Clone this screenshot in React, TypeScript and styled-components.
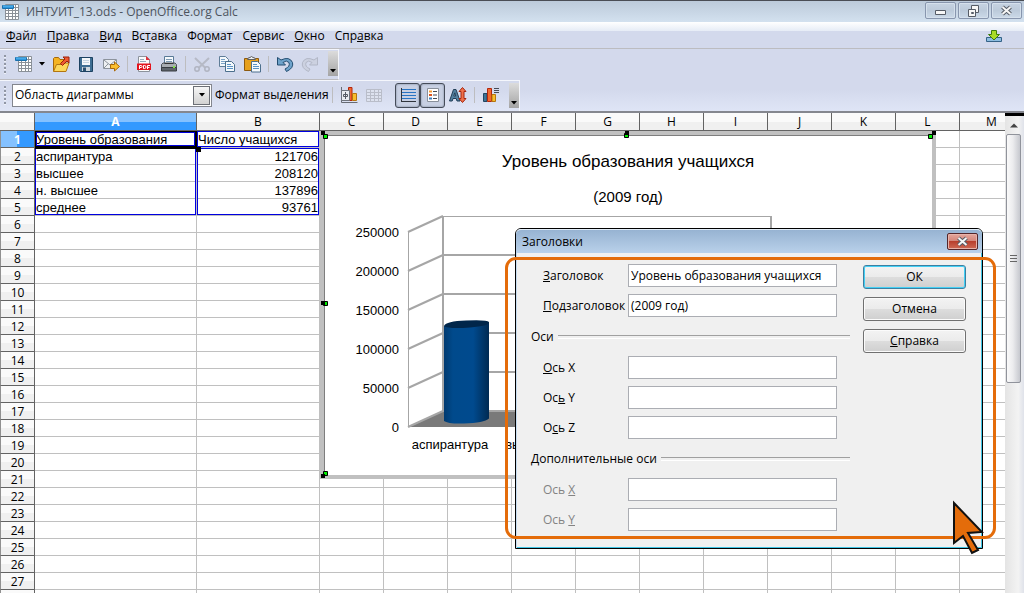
import React from 'react';
import styled, { createGlobalStyle, css } from 'styled-components';

const UI_FONT = '"Open Sans", "Noto Sans", sans-serif';
const CELL_FONT = '"Liberation Sans", Arial, sans-serif';

const GlobalStyle = createGlobalStyle`
  * { box-sizing: border-box; }
  body { margin: 0; font: 12px/16px ${UI_FONT}; color: #000; background: #fff; }
  button, input, select { font: inherit; color: inherit; }
`;

const Window = styled.div`
  position: relative;
  display: flex;
  flex-direction: column;
  height: 100vh;
  overflow: hidden;
  background: #d3d9ec;
`;

/* ---------- title bar ---------- */

const TitleBar = styled.header`
  display: flex;
  flex: none;
  align-items: center;
  height: 22px;
  padding: 0 2px;
  border-top: 1px solid #4a4d55;
  background: linear-gradient(#bccada, #d3e1ef);
`;

const WindowTitle = styled.h1`
  flex: 1;
  margin: 0 0 0 6px;
  font-size: 12px;
  font-weight: 400;
  color: #4c545e;
`;

const WindowButtons = styled.div`
  display: flex;
  gap: 2px;
  align-self: flex-start;
  padding-top: 1px;
`;

const WindowButton = styled.button`
  display: flex;
  align-items: center;
  justify-content: center;
  width: 31px;
  height: 17px;
  padding: 0;
  border: 1px solid #8896ae;
  border-radius: 2px;
  background: linear-gradient(#c6d3e2, #bccada 50%, #cbd9e8);
  box-shadow: inset 0 0 0 1px #d5e0ec;
`;

/* ---------- menu ---------- */

const MenuBar = styled.nav`
  display: flex;
  flex: none;
  align-items: center;
  gap: 10px;
  height: 27px;
  padding: 2px 22px 0 6px;
  border-bottom: 1px solid #bcbcc0;
  background: linear-gradient(#fff, #e6ecf6 9px, #d3d9ec 9px);
`;

const MenuItem = styled.button`
  padding: 0;
  border: 0;
  background: none;
  line-height: 16px;
`;

const UpdateButton = styled(MenuItem)`
  display: flex;
  margin-left: auto;
`;

/* ---------- toolbars ---------- */

const Toolbars = styled.div`
  display: flex;
  flex: none;
  flex-direction: column;
  align-items: flex-start;
  background: linear-gradient(#d3d9ec 65%, #dfe5f6);
  border-bottom: 2px solid #85878f;
`;

const Toolbar = styled.div<{ $divided?: boolean }>`
  display: flex;
  align-items: center;
  height: 31px;
  padding: 0 0 2px 11px;
  border-top: 1px solid #f4f6fc;
  border-right: 1px solid #f4f6fc;
  border-bottom: ${(p) => (p.$divided ? '1px solid #bcbcc0' : '0')};
  background: repeating-linear-gradient(#9096a4 0 2px, #eef1f9 2px 3px, transparent 3px 4px) 4px 5px / 2px 20px no-repeat;
`;

const ToolButton = styled.button<{ $pressed?: boolean }>`
  display: flex;
  align-items: center;
  justify-content: center;
  width: 25px;
  height: 25px;
  padding: 0;
  border: 0;
  background: none;
  ${(p) =>
    p.$pressed &&
    css`
      border: 1px solid #454c59;
      border-radius: 3px;
      background: #c8d0e3;
      box-shadow: inset 0 0 2px #6c7689;
    `}
`;

const DropArrow = styled(ToolButton)`
  width: 12px;
`;

const Separator = styled.span<{ $blank?: boolean }>`
  width: ${(p) => (p.$blank ? 9 : 8)}px;
  height: 16px;
  background: ${(p) => (p.$blank ? 'none' : 'linear-gradient(#bdbdbf, #bdbdbf) 4px 0 / 1px 16px no-repeat')};
`;

const Overflow = styled.button`
  display: flex;
  align-items: flex-end;
  justify-content: center;
  width: 10px;
  height: 25px;
  margin-left: 6px;
  padding: 0 0 3px;
  border: 0;
  background: linear-gradient(#dcdcdc, #a4a4a4);
`;

const ComboWrap = styled.div`
  position: relative;
  width: 200px;
  height: 23px;
  margin: 0 3px 0 1px;
`;

const Combo = styled.select`
  width: 100%;
  height: 100%;
  padding: 0 20px 0 2px;
  appearance: none;
  border: 1px solid #83868e;
  border-radius: 0;
  background: #fff;
`;

const ComboArrow = styled.span`
  position: absolute;
  top: 2px;
  right: 2px;
  bottom: 2px;
  display: flex;
  align-items: center;
  justify-content: center;
  width: 17px;
  border: 1px solid #6c6f76;
  background: linear-gradient(#f6f6f6, #d2d2d2);
  pointer-events: none;
`;

const FormatButton = styled(MenuItem)`
  width: 113px;
  text-align: left;
  white-space: nowrap;
`;

/* ---------- sheet ---------- */

const Workspace = styled.main`
  display: flex;
  flex: 1;
  min-height: 0;
  background: #fff;
`;

const SheetPane = styled.div`
  position: relative;
  flex: 1;
  min-width: 0;
  overflow: hidden;
`;

const Sheet = styled.table`
  width: 1024px;
  table-layout: fixed;
  border-collapse: separate;
  border-spacing: 0;
`;

const headerFace = css`
  padding: 0;
  border: solid #636363;
  border-width: 0 1px 1px 0;
  font-weight: 400;
  text-align: center;
  background: linear-gradient(#fafafa 50%, #f0f0f0 50%);
`;

const activeFace = css`
  color: #fff;
  font-weight: 700;
  background: linear-gradient(#84c1ff 50%, #3399ff 50%);
`;

const ColumnHead = styled.th<{ $active?: boolean }>`
  ${headerFace}
  height: 18px;
  line-height: 17px;
  ${(p) => p.$active && activeFace}
`;

const RowHead = styled.th<{ $active?: boolean }>`
  ${headerFace}
  height: 17px;
  padding-top: 1px;
  line-height: 15px;
  border-left: 1px solid #909090;
  ${(p) => p.$active && activeFace}
  ${(p) => p.$active && 'background: linear-gradient(90deg, #84c1ff 50%, #3399ff 50%);'}
`;

const BLUE = '#0000e0';
const sides: Record<string, string> = {
  l: `inset 1px 0 ${BLUE}`,
  r: `inset -1px 0 ${BLUE}`,
  t: `inset 0 1px ${BLUE}`,
  b: `inset 0 -1px ${BLUE}`,
};

const Cell = styled.td<{ $range?: string; $number?: boolean; $cursor?: boolean }>`
  position: relative;
  height: 17px;
  padding: 1px 1px 0;
  border: solid #c0c0c0;
  border-width: 0 1px 1px 0;
  font: 13px/15px ${CELL_FONT};
  text-align: ${(p) => (p.$number ? 'right' : 'left')};
  white-space: nowrap;
  ${(p) =>
    p.$range &&
    css`
      &::before {
        content: '';
        position: absolute;
        inset: 0 0 ${p.$range.includes('b') ? '0' : '-1px'} 0;
        box-shadow: ${p.$range.split('').map((s) => sides[s]).join(', ')};
      }
    `}
  ${(p) =>
    p.$cursor &&
    css`
      z-index: 1;
      &::before {
        content: '';
        position: absolute;
        inset: 0 -1px -2px 0;
        border: 1px solid #000;
        border-width: 1px 2px 3px 1px;
      }
      &::after {
        content: '';
        position: absolute;
        right: -5px;
        bottom: -5px;
        width: 5px;
        height: 5px;
        background: #000;
      }
    `}
`;

/* ---------- scrollbar ---------- */

const ScrollTrack = styled.div`
  display: flex;
  flex: none;
  flex-direction: column;
  align-items: center;
  width: 19px;
  padding-right: 2px;
  border-top: 3px solid #000;
  background: linear-gradient(90deg, #e4e4e4, #f3f3f3 70%, #dfe2ea);
`;

const ScrollUp = styled.button`
  display: flex;
  align-items: center;
  justify-content: center;
  width: 17px;
  height: 18px;
  padding: 0;
  border: 0;
  background: none;
`;

const Thumb = styled.div`
  display: flex;
  align-items: center;
  justify-content: center;
  width: 15px;
  height: 249px;
  border: 1px solid #90939b;
  border-radius: 2px;
  background: linear-gradient(90deg, #fafafa, #ececee 45%, #c6c8ce);
`;

/* ---------- chart object ---------- */

const ChartObject = styled.figure`
  position: absolute;
  top: 18px;
  left: 320px;
  width: 616px;
  height: 348px;
  margin: 0;
  border: 4px solid #c0c0c0;
  background: #fff;
`;

const ChartDrawing = styled.svg`
  display: block;
  margin: -4px;
  font-family: ${CELL_FONT};
`;

/* ---------- dialog ---------- */

const Dialog = styled.section`
  position: absolute;
  top: 228px;
  left: 515px;
  width: 468px;
  border: 1px solid #000;
  border-radius: 6px 6px 0 0;
  background: #f0f0f0;
  box-shadow: inset 1px 0 #c5dcf1, inset -1px -1px #3fc4e4;
`;

const DialogBar = styled.header`
  display: flex;
  align-items: center;
  justify-content: space-between;
  height: 24px;
  padding: 0 4px 0 6px;
  border-top: 1px solid #e2edf8;
  border-radius: 5px 5px 0 0;
  background: linear-gradient(#97b3d2, #b9d1ea);
`;

const DialogTitle = styled.h2`
  margin: 0;
  font-size: 12px;
  font-weight: 400;
`;

const CloseButton = styled.button`
  display: flex;
  align-items: center;
  justify-content: center;
  width: 31px;
  height: 17px;
  padding: 0;
  border: 1px solid #54262a;
  border-radius: 2px;
  background: linear-gradient(#e4a79d, #d4877b 45%, #b8402e 50%, #cf6a55);
  box-shadow: inset 0 0 0 1px #e7b3aa;
`;

const DialogBody = styled.form`
  display: flex;
  gap: 13px;
  padding: 11px 16px 17px 15px;
`;

const Fields = styled.div`
  flex: 1;
  min-width: 0;
`;

const Group = styled.fieldset`
  display: flex;
  flex-direction: column;
  gap: 7px;
  min-width: 0;
  margin: 0;
  padding: 0 13px 0 12px;
  border: 0;
`;

const GroupTitle = styled.legend`
  display: flex;
  align-items: center;
  gap: 4px;
  width: calc(100% + 25px);
  margin: 0 -13px 0 -12px;
  padding: 12px 0 11px;

  &::after {
    content: '';
    flex: 1;
    height: 2px;
    border-top: 1px solid #a0a0a0;
    border-bottom: 1px solid #fff;
  }
`;

const Field = styled.label<{ $disabled?: boolean }>`
  display: flex;
  align-items: center;
  color: ${(p) => (p.$disabled ? '#838383' : '#000')};
`;

const FieldName = styled.span`
  width: 85px;
  white-space: nowrap;
`;

const TextBox = styled.input`
  flex: 1;
  min-width: 0;
  height: 23px;
  padding: 0 2px;
  border: 1px solid #abadb3;
  background: #fff;
`;

const Actions = styled.div`
  display: flex;
  flex: none;
  flex-direction: column;
  gap: 8px;
  width: 103px;
  padding-top: 1px;
`;

const ActionButton = styled.button<{ $primary?: boolean }>`
  height: 24px;
  padding: 0;
  border: 1px solid ${(p) => (p.$primary ? '#3c7fa1' : '#707070')};
  border-radius: 3px;
  background: linear-gradient(#f3f3f3, #ebebeb 50%, #dddddd 50%, #cfcfcf);
  box-shadow: inset 0 0 0 1px ${(p) => (p.$primary ? '#43d0f5' : '#fbfbfb')};
`;

const Callout = styled.div`
  position: absolute;
  inset: 28px -14px 9px -11px;
  border: 3px solid #e46c0a;
  border-radius: 11px;
  pointer-events: none;
`;

const Pointer = styled.svg`
  position: absolute;
  right: -2px;
  bottom: -8px;
  pointer-events: none;
`;

/* ---------- icons ---------- */

const Icon = ({ children, size = 18 }: { children: React.ReactNode; size?: number }) => (
  <svg width={size} height={size} viewBox="0 0 18 18" fill="none" aria-hidden="true">
    {children}
  </svg>
);

const Down = () => (
  <svg width="6" height="4" viewBox="0 0 6 4" aria-hidden="true">
    <path d="M0 0h6L3 3.5z" fill="#000" />
  </svg>
);

const CalcIcon = () => (
  <Icon>
    <path d="M3.500 1.500h13v15h-13z" fill="#fff" stroke="#8a9097" />
    <path d="M6.500 2v14M10.500 2v14M13.500 2v14M4 7.500h12M4 10.500h12M4 13.500h12M4 4.500h12" stroke="#8a9097" />
    <path d="M.5 2.500h11v3h-11z" fill="#2f96dc" stroke="#1a70ac" />
    <path d="M1 3h10" stroke="#63bdf2" />
  </Icon>
);
const OpenIcon = () => (
  <Icon>
    <path d="M1.500 16V3.500l1-1h4l1.500 2h4V16z" fill="#f5b320" stroke="#a5680c" />
    <path d="M1.500 16.500l3-7h5l1.500-1.500h6l-3 8.500z" fill="#fcd75a" stroke="#b3760f" />
    <path d="M8.500 8.500l4.500-4.500-2-2h6v6l-2-2-4.500 4.500z" fill="#ee5a32" stroke="#9b1f0b" />
  </Icon>
);
const SaveIcon = () => (
  <Icon>
    <path d="M2.500 2.500h13v14h-12l-1-1z" fill="#3d6d92" stroke="#1d4261" />
    <path d="M5 3h8v7H5z" fill="#f4f7fa" />
    <path d="M6 5.500h6M6 7.500h6" stroke="#c5d4e0" />
    <path d="M5 12h8v4H5z" fill="#ced7de" />
    <path d="M6 12.500h3v3.500H6z" fill="#2a4f70" />
  </Icon>
);
const MailIcon = () => (
  <Icon>
    <path d="M1.500 4.500h13v9h-13z" fill="#eef0f2" stroke="#8c939c" />
    <path d="M2 5l6 5 6-5M2 13l4-4M14 13l-4-4" stroke="#8c939c" />
    <path d="M8.500 9.500h4v-2.500l5 4.500-5 4.500V13.500h-4z" fill="#fbbf2f" stroke="#a8690a" />
  </Icon>
);
const PdfIcon = () => (
  <Icon>
    <path d="M3.500 1.500h8l3 3v12h-11z" fill="#fafbfc" stroke="#8c939c" />
    <path d="M11 1l4 4h-4z" fill="#e0303a" />
    <path d="M5 4.500h4M5 6.500h6" stroke="#9ab" />
    <path d="M2 8.500h14v6.500H2z" fill="#e3141e" />
    <path d="M4.500 14V10.500h1.500q1 0 1 1t-1 1H4.500M8.500 13.500v-3h1q1.500 0 1.500 1.500t-1.500 1.500zM12.500 14v-3.500H15M12.500 12.500h2" stroke="#fff" />
  </Icon>
);
const PrintIcon = () => (
  <Icon>
    <path d="M4.500 9.500v-8h9v8z" fill="#f6fafd" stroke="#597a97" />
    <path d="M6 4.500h6M6 6.500h6" stroke="#7f9cb5" />
    <path d="M1.500 9.500l1.500-1.500h12l1.500 1.500v3h-15z" fill="#a8acb1" stroke="#4c5157" />
    <path d="M1.500 12.500h15v3.500h-15z" fill="#5e646b" stroke="#383c41" />
    <path d="M13 12h2" stroke="#7fe24a" strokeWidth="2" />
    <path d="M4.500 8.500h9" stroke="#333" />
  </Icon>
);
const CutIcon = () => (
  <Icon>
    <path d="M2 3l10 9.500M16 3L6 12.500" stroke="#b6bac6" strokeWidth="2" />
    <circle cx="4" cy="14" r="2.200" stroke="#b0b4c1" strokeWidth="1.500" />
    <circle cx="14" cy="14" r="2.200" stroke="#b0b4c1" strokeWidth="1.500" />
  </Icon>
);
const CopyIcon = () => (
  <Icon>
    <path d="M1.500 1.500h6l3 3v7h-9z" fill="#f5f9fc" stroke="#5f7d98" />
    <path d="M3 4.500h4M3 6.500h6M3 8.500h6" stroke="#7ba3c8" />
    <path d="M7.500 6.500h6l3 3v7h-9z" fill="#f5f9fc" stroke="#4c6f8d" />
    <path d="M9 9.500h4M9 11.500h6M9 13.500h6" stroke="#5b93c6" />
  </Icon>
);
const PasteIcon = () => (
  <Icon>
    <path d="M1.500 3.500h14v12h-14z" fill="#e6a01c" stroke="#8d5a10" />
    <path d="M4.500 4.500q0-2 2.500-2 1.500-2 3 0 2.500 0 2.500 2z" fill="#eef0f1" stroke="#5e5e5e" />
    <path d="M8.500 6.500h6l3 3v7.500h-9z" fill="#f5f9fc" stroke="#4c6f8d" />
    <path d="M10 9.500h4M10 11.500h6M10 13.500h6" stroke="#5b93c6" />
  </Icon>
);
const UndoIcon = ({ off }: { off?: boolean }) => (
  <Icon>
    <g transform={off ? 'translate(18 0) scale(-1 1)' : undefined}>
      <path
        d="M1.500 2.500v7.500h8l-2.500-2.500q3.500-3 6 0 1.500 4-4 6.500l1.500 2.500q7.500-3.500 6-9-3-6.500-11.500-2.500z"
        fill={off ? '#ccd1e0' : '#6ea3cb'}
        stroke={off ? '#b2b7c6' : '#234d70'}
      />
    </g>
  </Icon>
);
const BarsIcon = () => (
  <>
    <path d="M1.500 7.500h3.500v8h-3.500z" fill="#3f7396" stroke="#214560" />
    <path d="M5.500 2.500h4v13h-4z" fill="#f1692e" stroke="#b4260d" />
    <path d="M10 8.500h3.500v7h-3.500z" fill="#f8bd2d" stroke="#b4760e" />
  </>
);
const ChartTypeIcon = () => (
  <Icon>
    <path d="M1.500 1v15.500h16" stroke="#666b74" />
    <path d="M8.500 1.500h3.500v13h-3.500z" fill="#f1692e" stroke="#b4260d" />
    <path d="M12.500 7.500h4v7h-4z" fill="#f8bd2d" stroke="#b4760e" />
    <path d="M1.500 4.500h8v10h-8z" fill="#e9ecef" stroke="#6e747c" />
    <path d="M5.500 6v7M3.500 8.500h4v2h-4z" stroke="#555b63" />
  </Icon>
);
const GridIcon = () => (
  <Icon>
    <path d="M1.500 3.500h15v12h-15zM1.500 6.500h15M1.500 9.500h15M1.500 12.500h15M5.500 3.500v12M9.500 3.500v12M13.500 3.500v12" fill="#dde2ef" stroke="#b9bdc9" />
  </Icon>
);
const LinesIcon = () => (
  <Icon>
    <path d="M3 3.500h14M3 6.500h14M3 9.500h14M3 12.500h14" stroke="#2874c4" />
    <path d="M2.500 2v14M2 15.500h15" stroke="#30353d" />
  </Icon>
);
const LegendIcon = () => (
  <Icon>
    <path d="M3.500 2.500h11v13h-11z" fill="#fff" stroke="#89909b" />
    <path d="M5 4.500h3v2H5z" fill="#f69a32" />
    <path d="M5 8h3v2H5z" fill="#d9541f" />
    <path d="M5 11.500h3v2H5z" fill="#3d7ebd" />
    <path d="M9 5.500h4M9 9h4M9 12.500h4" stroke="#444a54" />
  </Icon>
);
const ScaleIcon = () => (
  <Icon>
    <path d="M.5 15l4-11.500h2.500L11 15H8l-.8-2.500H4L3.200 15zM4.800 10h1.900l-.9-3.200z" fill="#527f9f" stroke="#233f57" />
    <path d="M13.500 1.500l3.500 4h-2v7h2l-3.500 4-3.500-4h2v-7h-2z" fill="#f0704a" stroke="#a5260f" />
  </Icon>
);
const TitlesIcon = () => (
  <Icon>
    <BarsIcon />
    <path d="M12 2.500h5M12 4.500h5M12 6.500h5" stroke="#464b55" />
  </Icon>
);
const UpdateIcon = () => (
  <svg width="16" height="14" viewBox="0 0 16 14" aria-hidden="true">
    <path d="M.5 8.500h15v4H.5z" fill="#8dbde0" stroke="#356287" />
    <path d="M5.500 1.500h5v4h3L8 11 2.500 5.500h3z" fill="#a8dc28" stroke="#3d7d0b" />
  </svg>
);
const Cross = () => (
  <svg width="13" height="11" viewBox="0 0 13 11" aria-hidden="true">
    <path d="M2.500 2l8 7M10.500 2l-8 7" stroke="#565c66" strokeWidth="4" />
    <path d="M2.500 2l8 7M10.500 2l-8 7" stroke="#f6f6f6" strokeWidth="2" />
  </svg>
);

/* ---------- data ---------- */

const menus: [string, string, string][] = [
  ['', 'Ф', 'айл'],
  ['', 'П', 'равка'],
  ['', 'В', 'ид'],
  ['Вс', 'т', 'авка'],
  ['Фо', 'р', 'мат'],
  ['С', 'е', 'рвис'],
  ['', 'О', 'кно'],
  ['Спр', 'а', 'вка'],
];

const columns = 'ABCDEFGHIJKLM'.split('');
const data: [string, string][] = [
  ['Уровень образования', 'Число учащихся'],
  ['аспирантура', '121706'],
  ['высшее', '208120'],
  ['н. высшее', '137896'],
  ['среднее', '93761'],
];
const NUMBERED_ROWS = 27;

const rangeSides = (row: number) => {
  if (row === 0) return 'lrtb';
  if (row === 1) return 'lrt';
  return row === data.length - 1 ? 'lrb' : 'lr';
};

const ticks = [0, 50000, 100000, 150000, 200000, 250000];

/* Selection marks: black square and the green grip next to it. */
const handles = [
  { black: [1, 0], green: [4, 4] },
  { black: [305, 0], green: [305, 3] },
  { black: [612, 0], green: [609, 4] },
  { black: [1, 170], green: [4, 171] },
  { black: [1, 343], green: [4, 341] },
];

/* ---------- parts ---------- */

const Spreadsheet = () => (
  <Sheet>
    <colgroup>
      <col style={{ width: 35 }} />
      {columns.map((c, i) => (
        <col key={c} style={{ width: [162, 123][i] ?? 64 }} />
      ))}
    </colgroup>
    <thead>
      <tr>
        <ColumnHead aria-label="Выделить всё" />
        {columns.map((c) => (
          <ColumnHead key={c} scope="col" $active={c === 'A'}>{c}</ColumnHead>
        ))}
      </tr>
    </thead>
    <tbody>
      {Array.from({ length: NUMBERED_ROWS + 1 }, (_, r) => (
        <tr key={r}>
          <RowHead scope="row" $active={r === 0}>{r < NUMBERED_ROWS && r + 1}</RowHead>
          {columns.map((c, i) => (
            <Cell
              key={c}
              $cursor={r === 0 && i === 0}
              $number={r > 0 && i === 1}
              $range={r < data.length && i < 2 ? rangeSides(r) : undefined}
            >
              {data[r]?.[i]}
            </Cell>
          ))}
        </tr>
      ))}
    </tbody>
  </Sheet>
);

const Chart = () => (
  <ChartObject>
    <ChartDrawing width="616" height="348" viewBox="0 0 616 348" role="img" aria-label="Уровень образования учащихся">
      <defs>
        <linearGradient id="body">
          <stop offset="0" stopColor="#003a70" />
          <stop offset="0.2" stopColor="#004a8c" />
          <stop offset="0.65" stopColor="#004a8e" />
          <stop offset="1" stopColor="#002a52" />
        </linearGradient>
      </defs>
      <path d="M4.500 344V4.500H612" fill="none" stroke="#7e7e7e" />
      <text x="308" y="36" fontSize="17" textAnchor="middle">Уровень образования учащихся</text>
      <text x="308" y="71" fontSize="15" textAnchor="middle">(2009 год)</text>
      <path d="M88 296l35-16.500h328V296z" fill="#7a7a7a" />
      <g stroke="#a6a6a6" strokeWidth="2" fill="none">
        {ticks.map((t, i) => (
          <React.Fragment key={t}>
            <path d={`M88 ${296 - i * 39}l35-16`} />
            <path d={i === 5 ? 'M123 85.500h328' : `M123 ${280 - i * 39}h328`} strokeWidth={i === 5 ? 1 : 2} />
          </React.Fragment>
        ))}
        <path d="M88.500 296V101" strokeWidth="1" />
        <path d="M123 280V85M451 280V85" />
      </g>
      {ticks.map((t, i) => (
        <text key={t} x="79" y={301 - i * 39} fontSize="13" textAnchor="end">{t}</text>
      ))}
      <path d="M124 195v95q4 3 20 2.500 20-.5 25-5V191z" fill="url(#body)" />
      <path d="M124 195q2-5 22-5.500 21-1 23 1.500 0 4-19 5.500-22 1.500-26-1.500z" fill="#00264a" />
      <text x="130" y="318" fontSize="13" textAnchor="middle">аспирантура</text>
      <text x="209" y="318" fontSize="13" textAnchor="middle">высшее</text>
      {handles.map(({ black: [bx, by], green: [gx, gy] }) => (
        <g key={`${bx}-${by}`}>
          <path d={`M${gx - 0.5} ${gy - 0.5}h4v4h-4z`} fill="#00f000" stroke="#000" />
          <path d={`M${bx} ${by}h4v4h-4z`} fill="#000" />
        </g>
      ))}
    </ChartDrawing>
  </ChartObject>
);

type FieldProps = { label: [string, string, string]; value?: string; disabled?: boolean };

const FormField = ({ label: [before, key, after], value = '', disabled }: FieldProps) => (
  <Field $disabled={disabled}>
    <FieldName>{before}<u>{key}</u>{after}</FieldName>
    <TextBox type="text" defaultValue={value} disabled={disabled} />
  </Field>
);

const TitlesDialog = () => (
  <Dialog role="dialog" aria-labelledby="dialog-title">
    <DialogBar>
      <DialogTitle id="dialog-title">Заголовки</DialogTitle>
      <CloseButton type="button" aria-label="Закрыть"><Cross /></CloseButton>
    </DialogBar>
    <DialogBody onSubmit={(e) => e.preventDefault()}>
      <Fields>
        <Group>
          <FormField label={['', 'З', 'аголовок']} value="Уровень образования учащихся" />
          <FormField label={['', 'П', 'одзаголовок']} value="(2009 год)" />
        </Group>
        <Group>
          <GroupTitle>Оси</GroupTitle>
          <FormField label={['', 'О', 'сь X']} />
          <FormField label={['Ос', 'ь', ' Y']} />
          <FormField label={['О', 'с', 'ь Z']} />
        </Group>
        <Group>
          <GroupTitle>Дополнительные оси</GroupTitle>
          <FormField label={['Ось ', 'X', '']} disabled />
          <FormField label={['Ось ', 'Y', '']} disabled />
        </Group>
      </Fields>
      <Actions>
        <ActionButton type="submit" $primary>ОК</ActionButton>
        <ActionButton type="button">Отмена</ActionButton>
        <ActionButton type="button"><u>С</u>правка</ActionButton>
      </Actions>
    </DialogBody>
    <Callout />
    <Pointer width="34" height="56" viewBox="0 0 34 56" aria-hidden="true">
      <path d="M4 3L32 32 18 33 28 50 22 53 13 36 4 43z" fill="#e46c0a" stroke="#111" strokeWidth="2" />
    </Pointer>
  </Dialog>
);

export default function App() {
  return (
    <>
      <GlobalStyle />
      <Window>
        <TitleBar>
          <CalcIcon />
          <WindowTitle>ИНТУИТ_13.ods - OpenOffice.org Calc</WindowTitle>
          <WindowButtons>
            <WindowButton aria-label="Свернуть">
              <svg width="12" height="11" viewBox="0 0 12 11">
                <path d="M.5 5.500h10v4H.5z" fill="#f6f6f6" stroke="#565c66" />
              </svg>
            </WindowButton>
            <WindowButton aria-label="Восстановить">
              <svg width="13" height="12" viewBox="0 0 13 12">
                <path d="M4.500.5h7v7h-7z" fill="#f6f6f6" stroke="#565c66" />
                <path d="M1.500 4.500h7v7h-7z" fill="#f6f6f6" stroke="#565c66" />
                <path d="M4.500 7.500h2v1h-2z" fill="#c2cfdf" stroke="#565c66" />
              </svg>
            </WindowButton>
            <WindowButton aria-label="Закрыть окно"><Cross /></WindowButton>
          </WindowButtons>
        </TitleBar>
        <MenuBar>
          {menus.map(([a, k, b]) => (
            <MenuItem key={a + k + b}>{a}<u>{k}</u>{b}</MenuItem>
          ))}
          <UpdateButton aria-label="Обновления"><UpdateIcon /></UpdateButton>
        </MenuBar>
        <Toolbars>
          <Toolbar role="toolbar" $divided>
            <ToolButton aria-label="Создать"><CalcIcon /></ToolButton>
            <DropArrow aria-label="Типы документов"><Down /></DropArrow>
            <ToolButton aria-label="Открыть"><OpenIcon /></ToolButton>
            <ToolButton aria-label="Сохранить"><SaveIcon /></ToolButton>
            <ToolButton aria-label="Отправить"><MailIcon /></ToolButton>
            <Separator />
            <ToolButton aria-label="Экспорт в PDF"><PdfIcon /></ToolButton>
            <ToolButton aria-label="Печать"><PrintIcon /></ToolButton>
            <Separator />
            <ToolButton aria-label="Вырезать"><CutIcon /></ToolButton>
            <ToolButton aria-label="Копировать"><CopyIcon /></ToolButton>
            <ToolButton aria-label="Вставить"><PasteIcon /></ToolButton>
            <Separator />
            <ToolButton aria-label="Отменить"><UndoIcon /></ToolButton>
            <ToolButton aria-label="Вернуть"><UndoIcon off /></ToolButton>
            <Overflow aria-label="Ещё"><Down /></Overflow>
          </Toolbar>
          <Toolbar role="toolbar">
            <ComboWrap>
              <Combo aria-label="Элемент диаграммы">
                <option>Область диаграммы</option>
              </Combo>
              <ComboArrow><Down /></ComboArrow>
            </ComboWrap>
            <FormatButton>Формат выделения</FormatButton>
            <Separator />
            <ToolButton aria-label="Тип диаграммы"><ChartTypeIcon /></ToolButton>
            <ToolButton aria-label="Таблица данных"><GridIcon /></ToolButton>
            <Separator $blank />
            <ToolButton aria-label="Сетка" $pressed><LinesIcon /></ToolButton>
            <ToolButton aria-label="Легенда" $pressed><LegendIcon /></ToolButton>
            <ToolButton aria-label="Масштаб текста"><ScaleIcon /></ToolButton>
            <Separator />
            <ToolButton aria-label="Автоформат"><TitlesIcon /></ToolButton>
            <Overflow aria-label="Ещё"><Down /></Overflow>
          </Toolbar>
        </Toolbars>
        <Workspace>
          <SheetPane>
            <Spreadsheet />
            <Chart />
          </SheetPane>
          <ScrollTrack>
            <ScrollUp aria-label="Вверх">
              <svg width="8" height="5" viewBox="0 0 8 5"><path d="M0 4.500h8L4 .5z" fill="#444" /></svg>
            </ScrollUp>
            <Thumb>
              <svg width="7" height="9" viewBox="0 0 7 9">
                <path d="M0 1.500h7M0 4.500h7M0 7.500h7" stroke="#666" />
              </svg>
            </Thumb>
          </ScrollTrack>
        </Workspace>
        <TitlesDialog />
      </Window>
    </>
  );
}
